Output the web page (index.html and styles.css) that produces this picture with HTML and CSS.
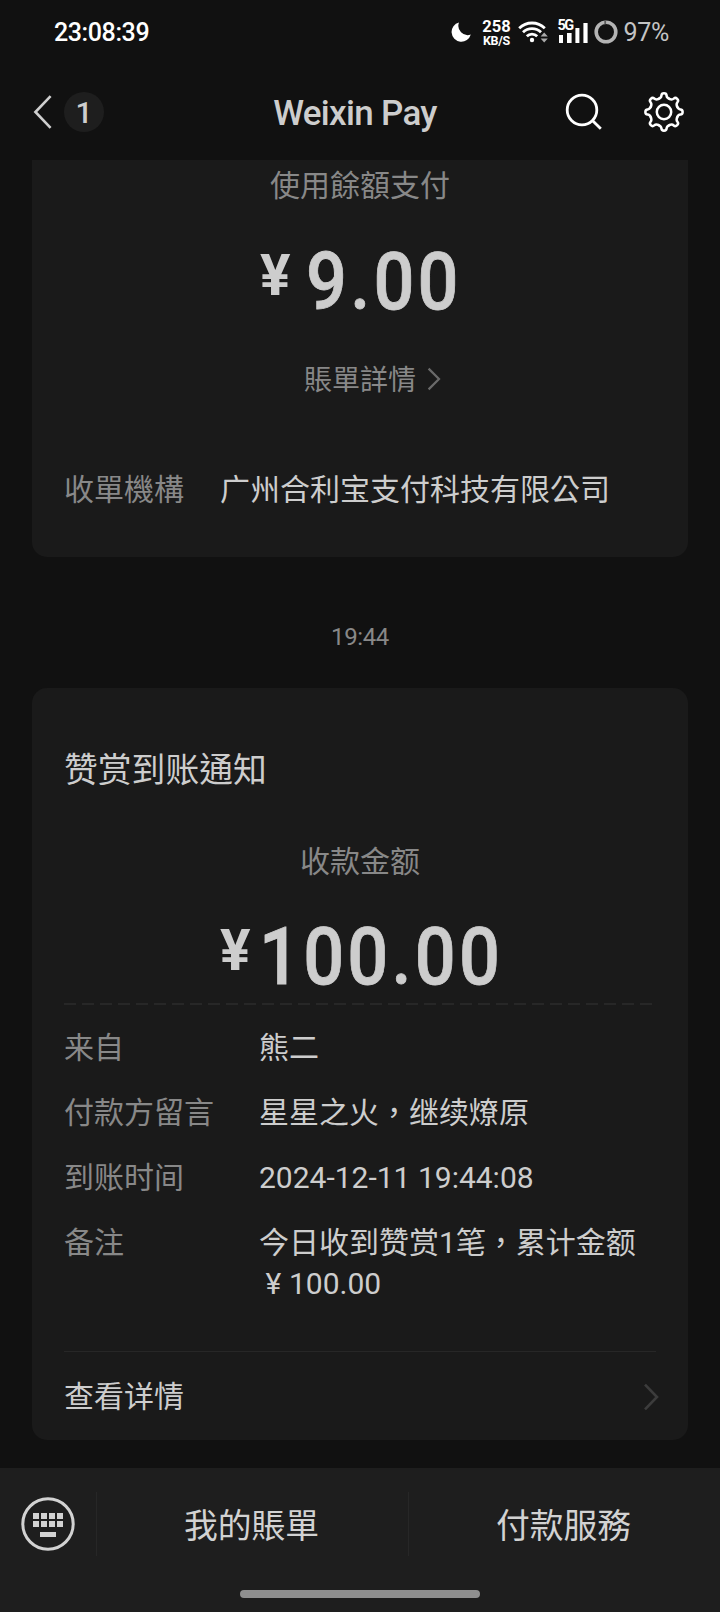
FILE: index.html
```html
<!DOCTYPE html>
<html lang="zh-Hant">
<head>
<meta charset="utf-8">
<title>Weixin Pay</title>
<link rel="stylesheet" href="styles.css">
</head>
<body>
<div class="screen">
  <header class="top">
    <div class="status">
      <span class="clock">23:08:39</span>
      <div class="status-right">
        <svg class="moon" width="20" height="20" viewBox="0 0 20 20"><path d="M8 0.4A9.8 9.8 0 1 0 19.8 12.6A9.4 9.4 0 0 1 8 0.4Z" fill="#fff"/></svg>
        <div class="speed"><span class="speed-num">258</span><span class="speed-unit">KB/S</span></div>
        <svg class="wifi" width="30" height="24" viewBox="0 0 30 24">
          <g fill="none" stroke="#fff" stroke-width="2.8">
            <path d="M1.2 8.2A18.4 18.4 0 0 1 26.8 8.2"/>
            <path d="M5 12.3A12.8 12.8 0 0 1 23 12.3"/>
            <path d="M8.8 16.2A7.4 7.4 0 0 1 19.2 16.2"/>
          </g>
          <circle cx="14" cy="20" r="2.2" fill="#fff"/>
          <path d="M22.6 16.4L26.2 12.4L29.8 16.4ZM22.6 18.6L26.2 22.6L29.8 18.6Z" fill="#aaa"/>
        </svg>
        <div class="signal">
          <span class="net">5G</span>
          <svg width="29" height="20" viewBox="0 0 29 20"><path d="M0 12h4v8H0zM8 10h4.6v10H8zM16.4 5h4v15h-4zM24.4 0h4.2v20h-4.2z" fill="#fff"/></svg>
        </div>
        <svg class="ring" width="24" height="24" viewBox="0 0 24 24"><circle cx="12" cy="12" r="9.8" fill="none" stroke="#b4b4b4" stroke-width="3.6"/><path d="M11.2 0.4V4.2" stroke="#5a5a5a" stroke-width="1.8"/></svg>
        <span class="pct">97%</span>
      </div>
    </div>
    <div class="nav">
      <svg class="back" width="20" height="36" viewBox="0 0 20 36"><path d="M17.6 2.2L2.4 18L17.6 33.8" fill="none" stroke="#cfcfcf" stroke-width="2.6"/></svg>
      <span class="count">1</span>
      <h1 class="title">Weixin Pay</h1>
      <svg class="search" width="40" height="40" viewBox="0 0 40 40"><g fill="none" stroke="#fff" stroke-width="2.8"><circle cx="18" cy="18" r="14.8"/><path d="M28.4 28.4L36.8 36.8"/></g></svg>
      <svg class="gear" width="42" height="42" viewBox="-21 -21 42 42">
        <defs><path id="tooth" d="M-5.43 -13.1C-3.2 -14 -2.7 -14.8 -2.6 -16.4C-2.4 -19.4 2.4 -19.4 2.6 -16.4C2.7 -14.8 3.2 -14 5.43 -13.1"/></defs>
        <g fill="none" stroke="#fff" stroke-width="2.5" stroke-linecap="round">
          <use href="#tooth"/><use href="#tooth" transform="rotate(45)"/><use href="#tooth" transform="rotate(90)"/><use href="#tooth" transform="rotate(135)"/>
          <use href="#tooth" transform="rotate(180)"/><use href="#tooth" transform="rotate(225)"/><use href="#tooth" transform="rotate(270)"/><use href="#tooth" transform="rotate(315)"/>
          <circle r="7.2"/>
        </g>
      </svg>
    </div>
  </header>

  <main class="feed">
    <section class="card paid">
      <p class="caption">使用餘額支付</p>
      <p class="amount"><span class="yen">¥</span><span class="num">9.00</span></p>
      <a class="bill">賬單詳情<svg width="14" height="24" viewBox="0 0 14 24"><path d="M1.6 1.6L12 12L1.6 22.4" fill="none" stroke="#6a6a6a" stroke-width="2.2"/></svg></a>
      <dl class="merchant"><dt>收單機構</dt><dd>广州合利宝支付科技有限公司</dd></dl>
    </section>

    <time class="stamp">19:44</time>

    <section class="card reward">
      <h2 class="heading">赞赏到账通知</h2>
      <p class="caption">收款金额</p>
      <p class="amount"><span class="yen">¥</span><span class="num">100.00</span></p>
      <div class="dashes"></div>
      <dl class="rows">
        <dt>来自</dt><dd>熊二</dd>
        <dt>付款方留言</dt><dd>星星之火，继续燎原</dd>
        <dt>到账时间</dt><dd>2024-12-11 19:44:08</dd>
        <dt>备注</dt><dd>今日收到赞赏1笔，累计金额<br><span class="unit">¥</span>100.00</dd>
      </dl>
      <a class="more"><span>查看详情</span><svg width="16" height="28" viewBox="0 0 16 28"><path d="M2 1.6L14 14L2 26.4" fill="none" stroke="#3c3c3c" stroke-width="2.6"/></svg></a>
    </section>
  </main>

  <footer class="bar">
    <div class="menu">
      <div class="keyboard">
        <svg width="54" height="54" viewBox="0 0 54 54"><circle cx="27" cy="27" r="25.2" fill="none" stroke="#d2d2d2" stroke-width="3"/><path d="M12 16h6v6h-6zM20 16h6v6h-6zM28 16h6v6h-6zM36 16h6v6h-6zM12 24h6v6h-6zM20 24h6v6h-6zM28 24h6v6h-6zM36 24h6v6h-6zM19 35h16v5H19z" fill="#d2d2d2"/></svg>
      </div>
      <a class="tab">我的賬單</a>
      <a class="tab">付款服務</a>
    </div>
    <div class="home"></div>
  </footer>
</div>
</body>
</html>
```

FILE: styles.css
```css
* { box-sizing: border-box; margin: 0; padding: 0; }
body { background: #111; }
.screen {
  width: 720px;
  height: 1612px;
  display: flex;
  flex-direction: column;
  overflow: hidden;
  background: #111;
  color: #cdcdcd;
  font-family: Roboto, "Noto Sans CJK TC", sans-serif;
  font-size: 30px;
}
svg { display: block; flex: none; }

.top { height: 160px; flex: none; }
.status {
  height: 64px;
  padding: 2px 51px 0 54px;
  display: flex;
  justify-content: space-between;
  align-items: center;
}
.clock { color: #fff; font-size: 25px; font-weight: 500; letter-spacing: -0.4px; line-height: 30px; }
.status-right { display: flex; align-items: center; }
.moon { margin-top: -2px; }
.speed {
  width: 30px;
  margin: 1px 7px 0 10px;
  display: flex;
  flex-direction: column;
  align-items: center;
  color: #fff;
  font-weight: 700;
}
.speed-num { font-size: 16.5px; line-height: 14px; }
.speed-unit { font-size: 12.5px; line-height: 13px; letter-spacing: -0.3px; }
.wifi { margin-top: -2px; }
.signal { position: relative; margin: 0 0 0 11px; }
.net {
  position: absolute;
  left: -2px;
  top: -3px;
  padding-right: 1px;
  background: #111;
  color: #fff;
  font-size: 14.5px;
  font-weight: 700;
  line-height: 12px;
  letter-spacing: -1.6px;
}
.ring { margin: -2px 0 0 6px; }
.pct { margin-left: 5px; color: #c4c4c4; font-size: 25px; line-height: 30px; letter-spacing: -0.3px; }

.nav { height: 96px; padding: 0 35px 0 33px; display: flex; align-items: center; }
.count {
  width: 40px;
  height: 40px;
  margin-left: 11px;
  border-radius: 50%;
  background: #1e1e1e;
  font-size: 30px;
  font-weight: 500;
  line-height: 42px;
  text-align: center;
}
.title { flex: 1; padding: 3px 0 0 42px; text-align: center; font-size: 35px; font-weight: 500; letter-spacing: -0.7px; line-height: 42px; }
.gear { margin-left: 39px; }

.feed { height: 1308px; padding: 0 32px; display: flex; flex-direction: column; }
.card { background: #1a1a1a; padding: 0 32px; }
.paid { height: 397px; border-radius: 0 0 15px 15px; }
.caption { color: #888; text-align: center; line-height: 44px; }
.paid .caption { padding-top: 4px; }
.amount { display: flex; }
.num {
  font-size: 80px;
  font-weight: 500;
  line-height: 94px;
  letter-spacing: 3.6px;
  -webkit-text-stroke: 0.8px #cdcdcd;
  transform: scaleX(0.9);
  transform-origin: left;
}
.yen { font-size: 57px; font-weight: 700; line-height: 67px; padding-top: 7px; }
.paid .yen { margin-left: 196px; width: 46px; }
.reward .yen { margin-left: 156px; width: 39px; }
.paid .amount { padding-top: 27px; }
.bill { display: flex; align-items: center; justify-content: center; gap: 11px; padding: 31px 0 0 25px; color: #888; font-size: 28px; line-height: 42px; }
.bill svg { margin-bottom: 4px; }
.merchant { display: flex; padding-top: 66px; line-height: 44px; }
.merchant dt { width: 156px; color: #888; }

.stamp { color: #888; font-size: 24px; line-height: 30px; text-align: center; margin: 65px 0 36px; letter-spacing: -0.4px; }

.reward { height: 752px; border-radius: 15px; }
.heading { padding-top: 59px; font-size: 33.8px; font-weight: 400; line-height: 48px; }
.reward .caption { padding-top: 45px; }
.reward .amount { padding-top: 26px; }
.dashes {
  height: 2px;
  width: 588px;
  margin-top: -1px;
  background: repeating-linear-gradient(90deg, #272727 0 12px, transparent 12px 18px);
}
.rows { display: grid; grid-template-columns: 195px 1fr; row-gap: 24px; padding-top: 22px; line-height: 41px; }
.rows dt { color: #888; }
.unit { display: inline-block; width: 30px; padding-right: 1px; text-align: center; }
.more {
  display: flex;
  justify-content: space-between;
  align-items: center;
  height: 90px;
  margin-top: 47px;
  border-top: 1px solid #272727;
}
.more span { padding-bottom: 5px; }
.more svg { margin: 0 -3px 0 0; }

.bar { flex: 1; background: #1e1e1e; }
.menu { display: flex; height: 64px; margin-top: 24px; }
.keyboard { width: 96px; padding: 5px 0 0 21px; }
.tab { flex: 1; padding-right: 2px; border-left: 1px solid #272727; font-size: 33.8px; line-height: 70px; text-align: center; color: #d2d2d2; }
.home { width: 240px; height: 8px; margin: 34px auto 0; border-radius: 4px; background: #8f8f8f; }
```
